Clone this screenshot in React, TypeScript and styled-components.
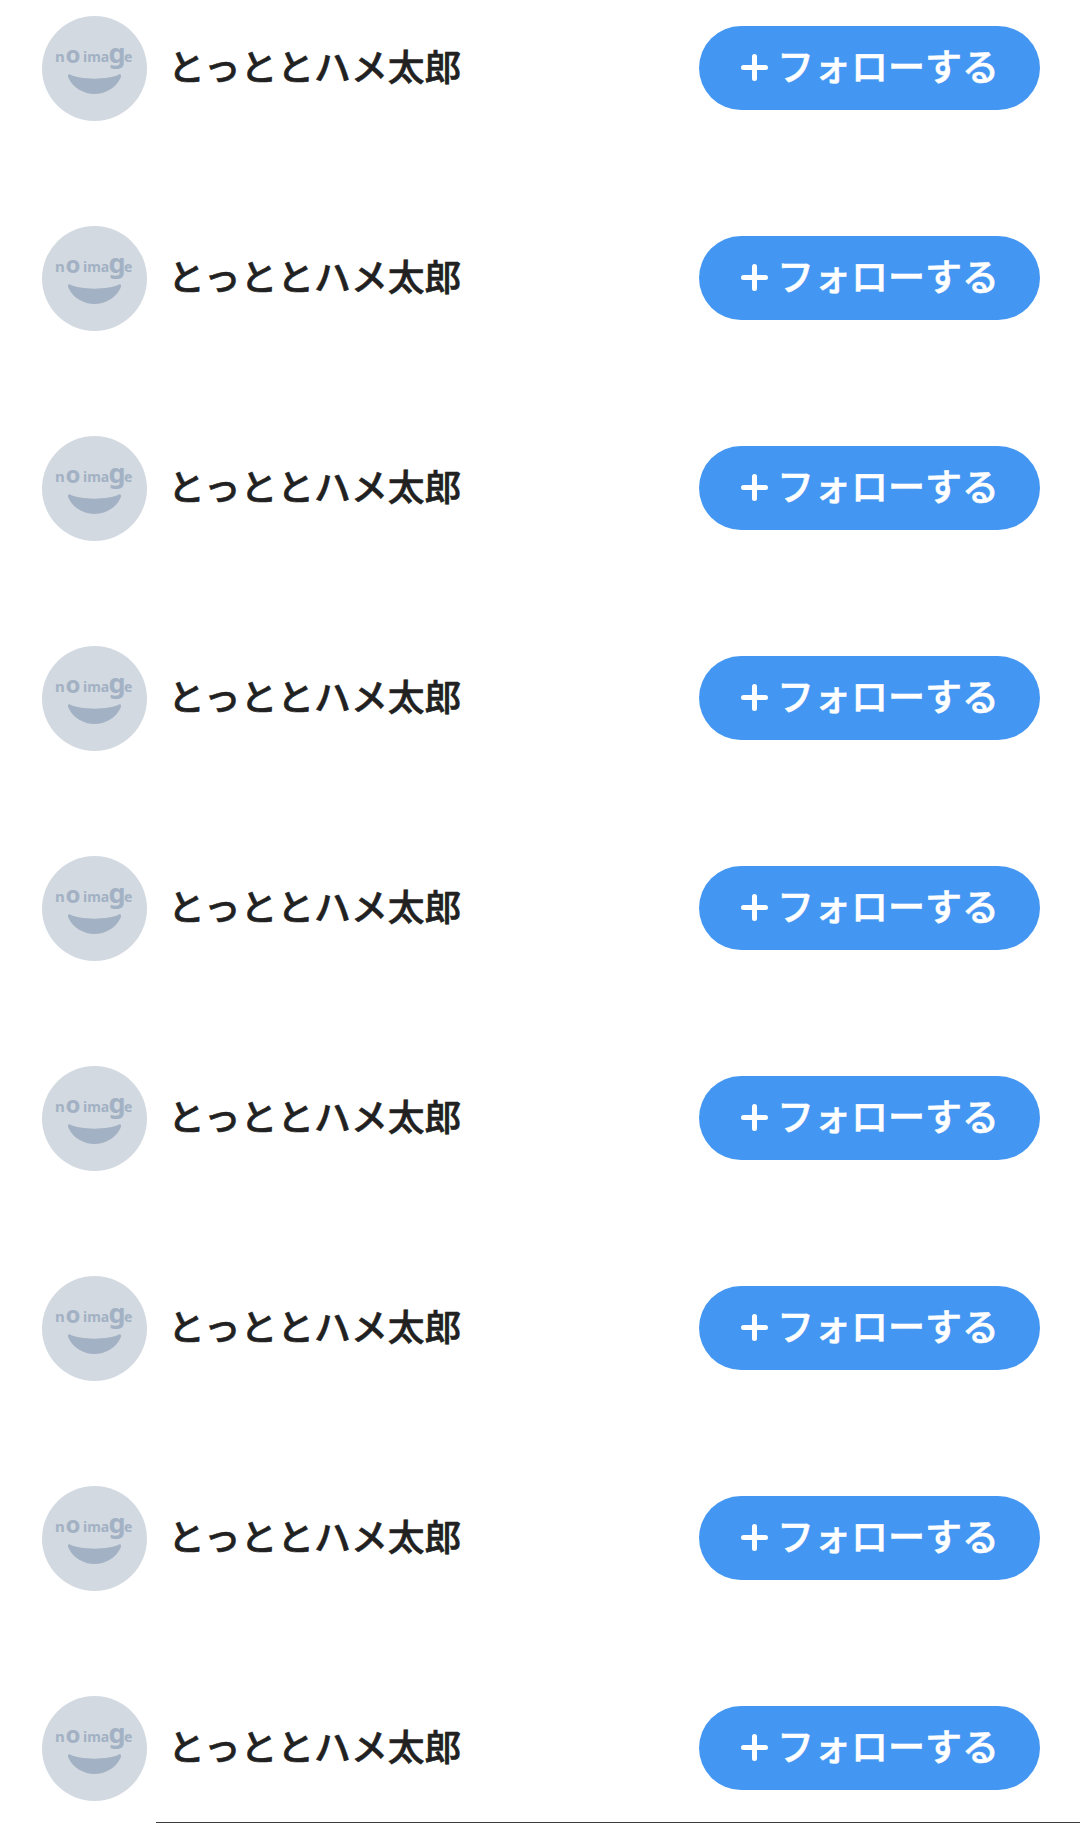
import React from 'react'
import styled, { createGlobalStyle } from 'styled-components'

const GlobalStyle = createGlobalStyle`
  html, body {
    margin: 0;
    padding: 0;
    background: #fff;
  }
`

const Page = styled.div`
  width: 1080px;
  height: 1823px;
  overflow: hidden;
  font-family: "Noto Sans CJK JP", "Noto Sans", sans-serif;
  display: flex;
  flex-direction: column;
`

const List = styled.ul`
  list-style: none;
  margin: 0;
  padding: 16px 40px 0 42px;
  display: flex;
  flex-direction: column;
  gap: 105px;
`

const Row = styled.li`
  display: flex;
  align-items: center;
  height: 105px;
`

const Name = styled.span`
  margin-left: 21px;
  flex: 1;
  font-size: 36.8px;
  font-weight: 500;
  -webkit-text-stroke: 0.6px #212121;
  line-height: 1;
  color: #212121;
  padding-bottom: 7px;
`

const FollowButton = styled.button`
  width: 341px;
  height: 84px;
  margin-bottom: 1px;
  border: none;
  border-radius: 42px;
  background: #4496f3;
  color: #fff;
  font-family: inherit;
  font-size: 37px;
  font-weight: 500;
  -webkit-text-stroke: 0.6px #fff;
  display: flex;
  align-items: center;
  padding: 0 0 7px 42px;
  gap: 9px;
`

const PlusWrap = styled.span`
  display: flex;
  padding-top: 5px;
`

const Divider = styled.div`
  margin: 21px 0 0 156px;
  height: 1px;
  background: #3c3c3c;
`

const Avatar = () => (
  <svg width="105" height="105" viewBox="0 0 105 105">
    <circle cx="52.5" cy="52.5" r="52.5" fill="#d2d9e0" />
    <g fontFamily="'Noto Sans', sans-serif" fontWeight="700" fill="#a3b1c4">
      <text x="13" y="46" fontSize="15">n</text>
      <text x="23.5" y="47" fontSize="24">o</text>
      <text x="41" y="46" fontSize="14">ima</text>
      <text x="66.5" y="46.5" fontSize="27">g</text>
      <text x="82" y="46" fontSize="14">e</text>
    </g>
    <path
      d="M28 58.5 C38 64 67 64 77 58.5 C79 57.5 79.5 60 78.5 62 C74 72 63 78 52.5 78 C42 78 31 72 26.5 62 C25.5 60 26 57.5 28 58.5 Z"
      fill="#a3b1c4"
    />
  </svg>
)

const PlusIcon = () => (
  <svg width="27" height="27" viewBox="0 0 27 27">
    <path d="M13.5 2.5V24.5M2.5 13.5H24.5" stroke="#fff" strokeWidth="5" strokeLinecap="round" fill="none" />
  </svg>
)

const users = Array.from({ length: 9 }, (_, i) => ({ id: i, name: 'とっととハメ太郎' }))

const App = () => (
  <Page>
    <GlobalStyle />
    <List>
      {users.map(user => (
        <Row key={user.id}>
          <Avatar />
          <Name>{user.name}</Name>
          <FollowButton>
            <PlusWrap>
              <PlusIcon />
            </PlusWrap>
            フォローする
          </FollowButton>
        </Row>
      ))}
    </List>
    <Divider />
  </Page>
)

export default App
